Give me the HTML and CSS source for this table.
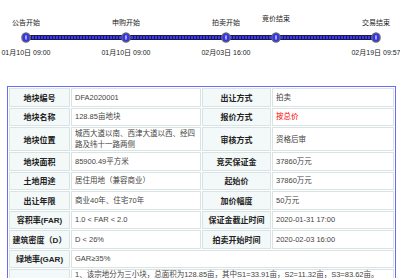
FILE: index.html
```html
<!DOCTYPE html>
<html lang="zh-CN">
<head>
<meta charset="utf-8">
<title>地块详情</title>
<link rel="stylesheet" href="styles.css">
</head>
<body>
<div class="timeline">
  <div class="bar"></div>
  <div class="stage c1">
    <div class="label">公告开始</div>
    <svg class="node" viewBox="0 0 10 11" width="10" height="11"><ellipse cx="5" cy="5.5" rx="4.8" ry="5.3" fill="#6b6b6b"/><ellipse cx="5" cy="5.5" rx="3.4" ry="3.9" fill="#3434f0"/><ellipse cx="5" cy="5.5" rx="0.9" ry="2.4" fill="#b8b8ff"/></svg>
    <div class="date">01月10日 09:00</div>
  </div>
  <div class="stage c3">
    <div class="label">申购开始</div>
    <svg class="node" viewBox="0 0 10 11" width="10" height="11"><ellipse cx="5" cy="5.5" rx="4.8" ry="5.3" fill="#6b6b6b"/><ellipse cx="5" cy="5.5" rx="3.4" ry="3.9" fill="#3434f0"/><ellipse cx="5" cy="5.5" rx="0.9" ry="2.4" fill="#b8b8ff"/></svg>
    <div class="date">01月10日 09:00</div>
  </div>
  <div class="stage c5">
    <div class="label">拍卖开始</div>
    <svg class="node" viewBox="0 0 10 11" width="10" height="11"><ellipse cx="5" cy="5.5" rx="4.8" ry="5.3" fill="#6b6b6b"/><ellipse cx="5" cy="5.5" rx="3.4" ry="3.9" fill="#3434f0"/><ellipse cx="5" cy="5.5" rx="0.9" ry="2.4" fill="#b8b8ff"/></svg>
    <div class="date">02月03日 16:00</div>
  </div>
  <div class="stage c6">
    <div class="label raised">竞价结束</div>
    <svg class="node" viewBox="0 0 10 11" width="10" height="11"><ellipse cx="5" cy="5.5" rx="4.8" ry="5.3" fill="#6b6b6b"/><ellipse cx="5" cy="5.5" rx="3.4" ry="3.9" fill="#3434f0"/><ellipse cx="5" cy="5.5" rx="0.9" ry="2.4" fill="#b8b8ff"/></svg>
    <div class="date"></div>
  </div>
  <div class="stage c8">
    <div class="label">交易结束</div>
    <svg class="node" viewBox="0 0 10 11" width="10" height="11"><ellipse cx="5" cy="5.5" rx="4.8" ry="5.3" fill="#6b6b6b"/><ellipse cx="5" cy="5.5" rx="3.4" ry="3.9" fill="#3434f0"/><ellipse cx="5" cy="5.5" rx="0.9" ry="2.4" fill="#b8b8ff"/></svg>
    <div class="date">02月19日 09:57</div>
  </div>
</div>

<table class="info">
  <colgroup>
    <col class="w1"><col class="w2"><col class="w3"><col class="w4">
  </colgroup>
  <tr><th>地块编号</th><td>DFA2020001</td><th>出让方式</th><td>拍卖</td></tr>
  <tr><th>地块名称</th><td>128.85亩地块</td><th>报价方式</th><td class="red">按总价</td></tr>
  <tr class="tall"><th>地块位置</th><td>城西大道以南、西津大道以西、经四路及纬十一路两侧</td><th>审核方式</th><td>资格后审</td></tr>
  <tr><th>地块面积</th><td>85900.49平方米</td><th>竞买保证金</th><td>37860万元</td></tr>
  <tr><th>土地用途</th><td>居住用地（兼容商业）</td><th>起始价</th><td>37860万元</td></tr>
  <tr><th>出让年限</th><td>商业40年、住宅70年</td><th>加价幅度</th><td>50万元</td></tr>
  <tr><th>容积率(FAR)</th><td>1.0 &lt; FAR &lt; 2.0</td><th>保证金截止时间</th><td>2020-01-31 17:00</td></tr>
  <tr><th>建筑密度（D）</th><td>D &lt; 26%</td><th>拍卖开始时间</th><td>2020-02-03 16:00</td></tr>
  <tr><th>绿地率(GAR)</th><td colspan="3">GAR≥35%</td></tr>
  <tr class="notes"><th></th><td colspan="3">1、该宗地分为三小块，总面积为128.85亩，其中S1=33.91亩，S2=11.32亩，S3=83.62亩。</td></tr>
</table>
</body>
</html>
```

FILE: styles.css
```css
html, body {
  margin: 0;
  padding: 0;
  background: #ffffff;
}

body {
  font-family: "Liberation Sans", "Noto Sans CJK SC", sans-serif;
  color: #333333;
}

.timeline {
  position: relative;
  display: grid;
  grid-template-columns: repeat(8, 50px);
  margin-left: 1px;
  padding-top: 18px;
}

.bar {
  position: absolute;
  top: 35px;
  left: 25px;
  width: 350px;
  height: 3px;
  border-top: 1px solid #1c1c40;
  border-bottom: 1px solid #1c1c40;
  background: repeating-linear-gradient(90deg, #3b3bf6 0 2px, #18185a 2px 3px);
}

.stage {
  position: relative;
  display: flex;
  flex-direction: column;
  align-items: center;
  font-size: 7px;
  line-height: 9px;
  color: #222222;
  white-space: nowrap;
}

.c1 { grid-column: 1; }
.c3 { grid-column: 3; }
.c5 { grid-column: 5; }
.c6 { grid-column: 6; }
.c8 { grid-column: 8; }

.label {
  height: 9px;
  margin-bottom: 5px;
}

.label.raised {
  margin-top: -4px;
  margin-bottom: 9px;
}

.node {
  display: block;
}

.date {
  height: 9px;
  margin-top: 5px;
}

.info {
  margin: 29px 0 0 7px;
  width: 389px;
  table-layout: fixed;
  border: 1px solid #6c6cf2;
  border-spacing: 1px;
  border-collapse: separate;
}

.w1 { width: 61px; }
.w2 { width: 130px; }
.w3 { width: 69px; }
.w4 { width: 122px; }

.info th,
.info td {
  border: 1px solid #d9e3e3;
  height: 18.5px;
  padding: 0 3px;
  box-sizing: border-box;
}

.info th {
  background: #f3f8f8;
  font-size: 8px;
  font-weight: bold;
  color: #222222;
  text-align: center;
  white-space: nowrap;
  padding: 0;
}

.info td {
  font-size: 7.5px;
  line-height: 11px;
  color: #444444;
  text-align: left;
  background: #ffffff;
}

.info .tall th,
.info .tall td {
  height: 22.5px;
}

.info td.red {
  color: #ff0000;
}

.info .notes td {
  vertical-align: top;
  padding-top: 0;
  line-height: 9px;
  height: 30px;
}
```
